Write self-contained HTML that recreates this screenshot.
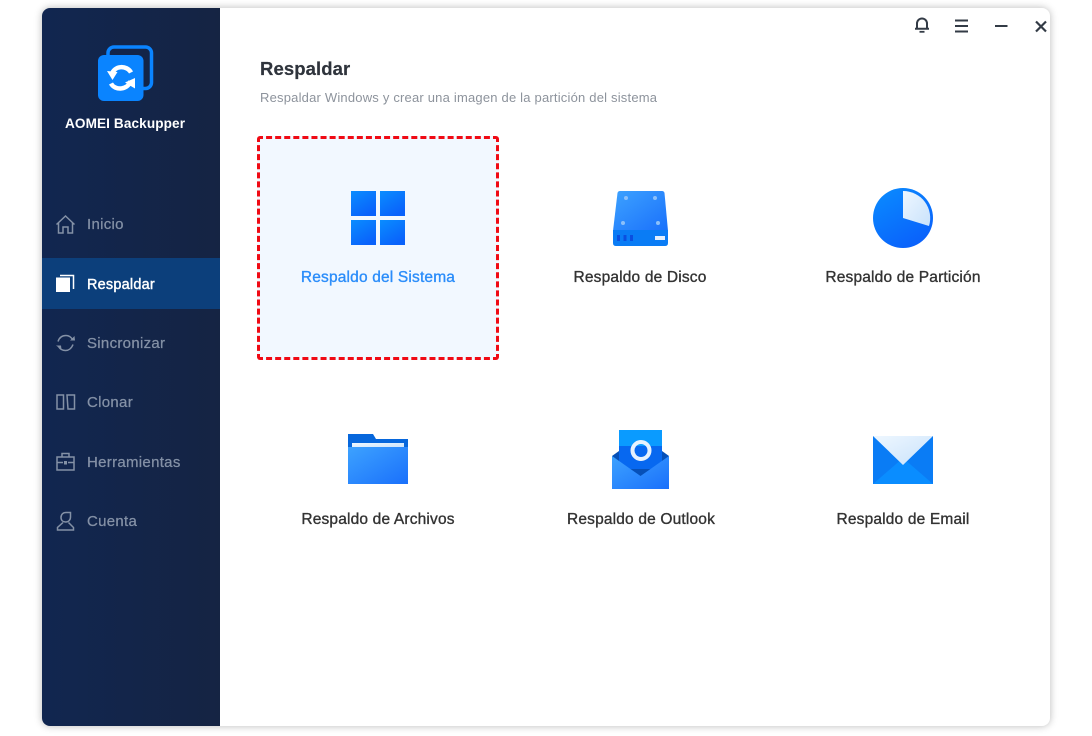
<!DOCTYPE html>
<html><head><meta charset="utf-8">
<style>
html,body{margin:0;padding:0;background:#fff;width:1092px;height:736px;overflow:hidden}
body{position:relative;font-family:"Liberation Sans",sans-serif}
#win{position:absolute;left:42px;top:8px;width:1008px;height:718px;background:#fff;border-radius:8px;box-shadow:0 0 8px rgba(0,0,0,.28);overflow:hidden}
#side{position:absolute;left:42px;top:8px;width:178px;height:718px;background:linear-gradient(90deg,#112650,#152443);border-radius:8px 0 0 8px}
#act{position:absolute;left:42px;top:258px;width:178px;height:51px;background:#0c3f7b}
.t{position:absolute;white-space:nowrap;line-height:20px;height:20px}
.nav{left:87px;font-size:15px;color:#8491a6;-webkit-text-stroke:.25px #8491a6;letter-spacing:.3px}
.lab{font-size:15.500px;color:#333;width:240px;text-align:center;-webkit-text-stroke:.35px #333;letter-spacing:.17px}
svg{position:absolute;overflow:visible}
#sel{position:absolute;left:257px;top:136px;width:236px;height:218px;background:#f2f8ff;border:3px dashed #f00a14;border-radius:3px}
</style></head><body>
<div id="win"></div>
<div id="side"></div>
<div id="act"></div>

<svg style="left:95px;top:42px" width="62" height="62" viewBox="95 42 62 62">
<rect x="108" y="47" width="43.500" height="41.500" rx="6" fill="none" stroke="#0a84ff" stroke-width="3.500"/>
<rect x="98" y="55" width="45.500" height="46" rx="6" fill="#0a84ff"/>
<path d="M131 72.500C127 65 114 65 111.500 75" fill="none" stroke="#fff" stroke-width="4.500"/>
<path d="M107 71l10.500 1-5 8z" fill="#fff"/>
<path d="M111 83.500C115 91 128 90 130.500 81" fill="none" stroke="#fff" stroke-width="4.500"/>
<path d="M135 78v10.500l-10-6z" fill="#fff"/>
</svg>
<div class="t" style="left:65px;top:114px;font-size:13.600px;font-weight:bold;color:#fff;letter-spacing:.1px">AOMEI Backupper</div>

<svg style="left:55px;top:214px" width="21" height="21" viewBox="0 0 21 21" fill="none" stroke="#8491a6" stroke-width="1.500"><path d="M1.500 10.500 10.500 2l9 8.500M3.500 9v10h4.500v-6h5v6h4.500V9"/></svg>
<div class="t nav" style="top:215px">Inicio</div>

<svg style="left:55px;top:273px" width="21" height="20" viewBox="0 0 21 20"><rect x="1" y="4.500" width="14" height="14.500" fill="#fff"/><path d="M5 2.500H18.500V16" fill="none" stroke="#fff" stroke-width="1.500"/></svg>
<div class="t nav" style="top:275px;font-size:14.500px;color:#fff;-webkit-text-stroke:.4px #fff;letter-spacing:.2px">Respaldar</div>

<svg style="left:55px;top:333px" width="21" height="20" viewBox="0 0 21 20" fill="none" stroke="#8491a6" stroke-width="1.500"><path d="M3 8.500C4.500 4 8 2.500 11 2.500c3 0 5 1.500 6.500 4M18 11.500c-1.500 4-4.500 6-7.500 6-3 0-5.500-1.500-7-4"/><path d="M15 7.500h5l-.5-4.500zM1 12.500h5l.5 4z" fill="#8491a6" stroke="none"/></svg>
<div class="t nav" style="top:334px">Sincronizar</div>

<svg style="left:56px;top:393px" width="20" height="18" viewBox="0 0 20 18" fill="none" stroke="#8491a6" stroke-width="1.500"><rect x="1" y="2" width="6.500" height="14"/><path d="M11 2h7.500v14H12z"/></svg>
<div class="t nav" style="top:393px">Clonar</div>

<svg style="left:56px;top:452px" width="20" height="20" viewBox="0 0 20 20" fill="none" stroke="#8491a6" stroke-width="1.500"><rect x="1" y="5" width="17" height="13"/><path d="M6 5V1.500h7V5M1 10.500h6M12 10.500h6"/><rect x="8" y="9" width="3" height="3.500" fill="#8491a6" stroke="none"/></svg>
<div class="t nav" style="top:453px">Herramientas</div>

<svg style="left:56px;top:511px" width="20" height="20" viewBox="0 0 20 20" fill="none" stroke="#8491a6" stroke-width="1.500"><path d="M5 6.500C5 3.500 7 1.500 10 1.500h4.500v4.500c0 3-2 5-4.800 5C7 11 5 9.500 5 6.500z"/><path d="M7 11.500 1.500 16.500v2.500h16v-2.500L12.500 11.500"/></svg>
<div class="t nav" style="top:512px">Cuenta</div>

<svg style="left:914px;top:16px" width="16" height="18" viewBox="0 0 16 18" fill="none" stroke="#333b46" stroke-width="2"><path d="M3 12.500V7.500a5 5 0 0 1 10 0v5M1 12.800h14"/><path d="M5.500 15.800h5" stroke-width="1.800"/></svg>
<svg style="left:955px;top:19px" width="14" height="13" viewBox="0 0 14 13" stroke="#333b46" stroke-width="2"><path d="M0 1.500h13M0 7h13M0 12.500h13"/></svg>
<svg style="left:995px;top:25px" width="13" height="2" viewBox="0 0 13 2" stroke="#333b46" stroke-width="2"><path d="M0 1h12.500"/></svg>
<svg style="left:1035px;top:20px" width="12" height="12" viewBox="0 0 12 12" stroke="#333b46" stroke-width="2.200"><path d="M1 1.500l10 10M11 1.500 1 11.500"/></svg>

<div class="t" style="left:260px;top:59px;font-size:18.500px;font-weight:bold;color:#2f343c;letter-spacing:.1px;-webkit-text-stroke:.2px #2f343c">Respaldar</div>
<div class="t" style="left:260px;top:88px;font-size:13px;color:#8d939c;letter-spacing:.2px">Respaldar Windows y crear una imagen de la partición del sistema</div>

<div id="sel"></div>

<svg style="left:351px;top:191px" width="54" height="54" viewBox="0 0 54 54">
<defs><linearGradient id="b" x1="0" y1="0" x2=".6" y2="1"><stop offset="0" stop-color="#0a8dff"/><stop offset="1" stop-color="#0a62fb"/></linearGradient>
<linearGradient id="f" x1="0" y1="0" x2="1" y2="1"><stop offset="0" stop-color="#3da2ff"/><stop offset="1" stop-color="#1a70fb"/></linearGradient>
<linearGradient id="w" x1="0" y1="0" x2="1" y2="1"><stop offset="0" stop-color="#eef7ff"/><stop offset="1" stop-color="#c9e2fb"/></linearGradient></defs>
<rect width="25" height="25" fill="url(#b)"/><rect x="29" width="25" height="25" fill="url(#b)"/><rect y="29" width="25" height="25" fill="url(#b)"/><rect x="29" y="29" width="25" height="25" fill="url(#b)"/></svg>
<div class="t lab" style="left:258px;top:268px;color:#2b8dfa;-webkit-text-stroke:.35px #2b8dfa">Respaldo del Sistema</div>

<svg style="left:612px;top:190px" width="57" height="57" viewBox="0 0 57 57">
<path d="M8 1h42q2 0 2.500 2L56 41H1L5.500 3Q6 1 8 1z" fill="url(#f)"/><path d="M1 40h55v13q0 3-3 3H4q-3 0-3-3z" fill="#0a7cf5"/>
<g fill="#8cc0fa"><circle cx="14" cy="8" r="2"/><circle cx="43" cy="8" r="2"/><circle cx="11" cy="33" r="2"/><circle cx="46" cy="33" r="2"/></g>
<rect x="5" y="45" width="3" height="6" fill="#0a4fe0"/><rect x="11.500" y="45" width="3" height="6" fill="#0a4fe0"/><rect x="18" y="45" width="3" height="6" fill="#0a4fe0"/><rect x="43" y="46" width="10" height="4" fill="#e2effd"/></svg>
<div class="t lab" style="left:520px;top:268px">Respaldo de Disco</div>

<svg style="left:873px;top:188px" width="60" height="60" viewBox="0 0 60 60">
<circle cx="30" cy="30" r="30" fill="url(#b)"/><path d="M30 3a27 27 0 0 1 26 35L30 30z" fill="url(#w)"/></svg>
<div class="t lab" style="left:783px;top:268px">Respaldo de Partición</div>

<svg style="left:348px;top:434px" width="60" height="51" viewBox="0 0 60 51">
<path d="M0 0h25l3 5h32v12H0z" fill="#0767dc"/><rect x="4" y="9" width="52" height="5" fill="url(#w)"/><rect y="13" width="60" height="37" fill="url(#f)"/></svg>
<div class="t lab" style="left:258px;top:510px">Respaldo de Archivos</div>

<svg style="left:611px;top:430px" width="60" height="60" viewBox="0 0 60 60">
<path d="M1 26l7-5v12zM58 26l-7-5v12z" fill="#0650b8"/>
<rect x="8" y="0" width="43" height="16" fill="#0a9bff"/><rect x="8" y="16" width="43" height="26" fill="#0768f0"/>
<circle cx="30" cy="20.500" r="8.500" fill="none" stroke="#e6f2fe" stroke-width="4"/>
<path d="M19 39h21L29.500 47z" fill="#0650b8"/>
<path d="M1 26 29.500 46 58 26v33H1z" fill="url(#f)"/></svg>
<div class="t lab" style="left:521px;top:510px">Respaldo de Outlook</div>

<svg style="left:873px;top:436px" width="60" height="48" viewBox="0 0 60 48">
<rect width="60" height="48" fill="#0a7cf5"/><path d="M0 48 30 22l30 26z" fill="#0a8dff"/><path d="M0 0h60L30 29z" fill="url(#w)"/></svg>
<div class="t lab" style="left:783px;top:510px">Respaldo de Email</div>
</body></html>
